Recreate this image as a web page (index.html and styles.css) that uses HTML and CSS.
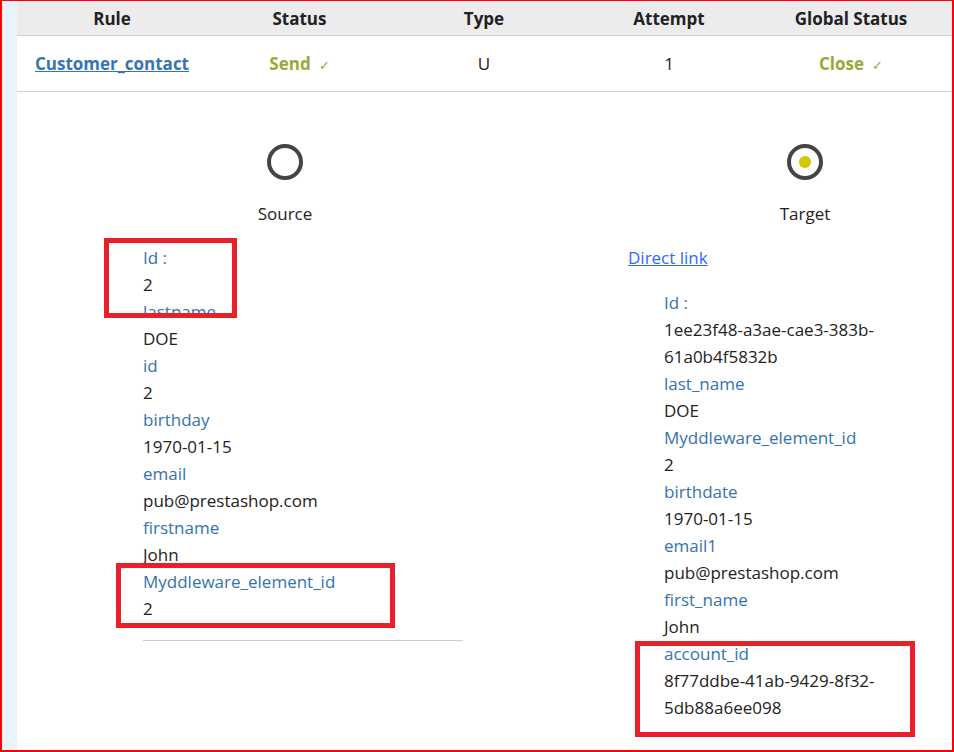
FILE: index.html
```html
<!DOCTYPE html>
<html>
<head>
<meta charset="utf-8">
<link rel="stylesheet" href="styles.css">
</head>
<body>
<div class="frame">
  <div class="strip"></div>
  <div class="main">
    <table class="tbl">
      <colgroup>
        <col class="c1"><col class="c2"><col class="c3"><col class="c4"><col class="c5">
      </colgroup>
      <thead>
        <tr><th>Rule</th><th>Status</th><th>Type</th><th>Attempt</th><th class="last">Global Status</th></tr>
      </thead>
      <tbody>
        <tr>
          <td><a class="rule" href="#">Customer_contact</a></td>
          <td><span class="ok">Send</span><span class="chk">✓</span></td>
          <td class="plain">U</td>
          <td class="plain">1</td>
          <td class="last"><span class="ok">Close</span><span class="chk">✓</span></td>
        </tr>
      </tbody>
    </table>

    <div class="detail">
      <div class="side">
        <div class="head">
          <span class="radio"></span>
          <div class="cap">Source</div>
        </div>
        <div class="fields left">
          <div class="lbl">Id :</div><div class="val">2</div>
          <div class="lbl">lastname</div><div class="val">DOE</div>
          <div class="lbl">id</div><div class="val">2</div>
          <div class="lbl">birthday</div><div class="val">1970-01-15</div>
          <div class="lbl">email</div><div class="val">pub@prestashop.com</div>
          <div class="lbl">firstname</div><div class="val">John</div>
          <div class="lbl">Myddleware_element_id</div><div class="val">2</div>
        </div>
        <div class="divider"></div>
      </div>
      <div class="side">
        <div class="head">
          <span class="radio on"><span class="dot"></span></span>
          <div class="cap">Target</div>
        </div>
        <a class="direct" href="#">Direct link</a>
        <div class="fields right">
          <div class="lbl">Id :</div><div class="val">1ee23f48-a3ae-cae3-383b-61a0b4f5832b</div>
          <div class="lbl">last_name</div><div class="val">DOE</div>
          <div class="lbl">Myddleware_element_id</div><div class="val">2</div>
          <div class="lbl">birthdate</div><div class="val">1970-01-15</div>
          <div class="lbl">email1</div><div class="val">pub@prestashop.com</div>
          <div class="lbl">first_name</div><div class="val">John</div>
          <div class="lbl">account_id</div><div class="val">8f77ddbe-41ab-9429-8f32-5db88a6ee098</div>
        </div>
      </div>
    </div>
  </div>
  <div class="mark m1"></div>
  <div class="mark m2"></div>
  <div class="mark m3"></div>
</div>
</body>
</html>
```

FILE: styles.css
```css
html, body {
  margin: 0;
  padding: 0;
  background: #fff;
}
body {
  font-family: "Open Sans", "Noto Sans", sans-serif;
  color: #222;
}
.frame {
  position: relative;
  width: 954px;
  height: 752px;
  box-sizing: border-box;
  border-style: solid;
  border-color: #f00;
  border-width: 1px 2px 2px 2px;
  display: flex;
  overflow: hidden;
}
.strip {
  width: 15px;
  flex: none;
  background: #eaf2fb;
}
.main {
  flex: 1;
  min-width: 0;
}
.tbl {
  width: 100%;
  border-collapse: collapse;
  table-layout: fixed;
}
.c1 { width: 190px; }
.c2 { width: 185px; }
.c3 { width: 184px; }
.c4 { width: 186px; }
.c5 { width: 190px; }
.tbl th {
  background: #ececec;
  height: 34px;
  padding: 0;
  font-size: 17px;
  font-weight: 700;
  color: #222;
  text-align: center;
  border-bottom: 1px solid #cfcfcf;
  vertical-align: middle;
}
.tbl td {
  height: 55px;
  padding: 0;
  text-align: center;
  border-bottom: 1px solid #d2d2d2;
  font-size: 17px;
  vertical-align: middle;
}
.tbl .last {
  padding-right: 12px;
}
.rule {
  color: #3674b3;
  font-weight: 700;
  text-decoration: underline;
}
.ok {
  color: #9aa837;
  font-weight: 700;
}
.chk {
  color: #9aa837;
  font-size: 13px;
  margin-left: 8px;
}
.plain {
  color: #222;
}
.detail {
  display: grid;
  grid-template-columns: 360px 360px;
  column-gap: 160px;
  padding-left: 88px;
}
.head {
  display: flex;
  flex-direction: column;
  align-items: center;
  padding-top: 52px;
}
.radio {
  width: 36px;
  height: 36px;
  box-sizing: border-box;
  border: 4px solid #444;
  border-radius: 50%;
  display: flex;
  align-items: center;
  justify-content: center;
}
.dot {
  width: 12px;
  height: 12px;
  border-radius: 50%;
  background: #d0c800;
}
.cap {
  margin-top: 20px;
  font-size: 17px;
  line-height: 27px;
}
.fields {
  font-size: 17px;
  line-height: 27px;
}
.fields.left {
  margin-top: 17px;
  padding-left: 38px;
}
.fields.right {
  margin-top: 18px;
  padding-left: 39px;
  width: 250px;
}
.lbl {
  color: #3572b0;
}
.val {
  color: #222;
}
.direct {
  display: block;
  margin-top: 17px;
  margin-left: 3px;
  font-size: 17px;
  line-height: 27px;
  color: #3366ff;
  text-decoration: underline;
}
.divider {
  margin: 18px 0 0 38px;
  width: 320px;
  height: 1px;
  background: #cccccc;
}
.mark {
  position: absolute;
  border: 5px solid #e8202a;
  box-sizing: border-box;
}
.m1 {
  left: 102px;
  top: 237px;
  width: 133px;
  height: 80px;
}
.m2 {
  left: 114px;
  top: 562px;
  width: 279px;
  height: 65px;
}
.m3 {
  left: 633px;
  top: 640px;
  width: 280px;
  height: 96px;
}
```
